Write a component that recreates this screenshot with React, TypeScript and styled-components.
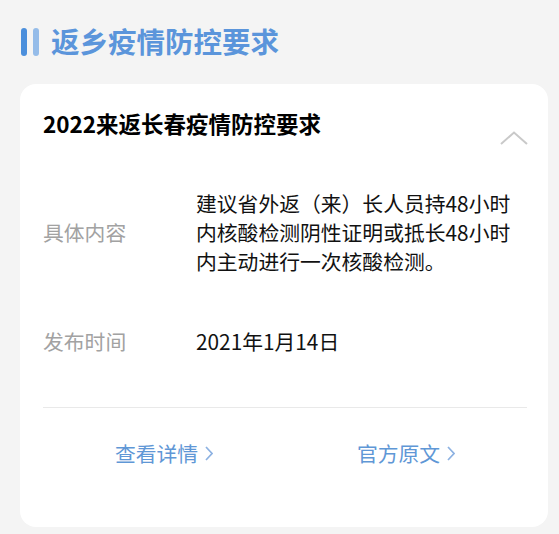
import * as React from 'react';
import styled, {createGlobalStyle} from 'styled-components';

const GlobalStyle = createGlobalStyle`
  html, body {
    margin: 0;
    padding: 0;
    background: #f4f4f4;
    font-family: "Noto Sans CJK SC", "Noto Sans", sans-serif;
  }
`;

type InfoItem = {
  label: string;
  value: string;
  height: number;
};

const items: InfoItem[] = [
  {
    label: '具体内容',
    value: '建议省外返（来）长人员持48小时内核酸检测阴性证明或抵长48小时内主动进行一次核酸检测。',
    height: 136,
  },
  {label: '发布时间', value: '2021年1月14日', height: 82},
];

const links = ['查看详情', '官方原文'];

const ChevronUp = () => (
  <svg width="28" height="14" viewBox="0 0 28 14" fill="none">
    <polyline points="1,13 14,1.5 27,13" stroke="#c9c9c9" strokeWidth="2" />
  </svg>
);

const ChevronRight = () => (
  <svg width="8" height="15" viewBox="0 0 8 15" fill="none">
    <polyline points="1,1 7,7.5 1,14" stroke="#8db2e2" strokeWidth="1.7" />
  </svg>
);

const App = () => {
  return (
    <Page>
      <GlobalStyle />
      <PageHeader>
        <Bars>
          <Bar />
          <Bar $light />
        </Bars>
        <PageTitle>返乡疫情防控要求</PageTitle>
      </PageHeader>

      <Card>
        <CardHeader>
          <CardTitle>2022来返长春疫情防控要求</CardTitle>
          <Toggle>
            <ChevronUp />
          </Toggle>
        </CardHeader>

        {items.map((item) => (
          <InfoRow key={item.label} $height={item.height}>
            <Label>{item.label}</Label>
            <Value>{item.value}</Value>
          </InfoRow>
        ))}

        <Divider />

        <Footer>
          {links.map((text) => (
            <LinkCell key={text}>
              <LinkText>
                {text}
                <ChevronRight />
              </LinkText>
            </LinkCell>
          ))}
        </Footer>
      </Card>
    </Page>
  );
};

export default App;

const Page = styled.div`
  width: 559px;
  min-height: 534px;
  box-sizing: border-box;
  padding: 0 11px 0 20px;
`;

const PageHeader = styled.header`
  height: 82px;
  margin-bottom: 2px;
  display: flex;
  align-items: center;
  gap: 12px;
`;

const Bars = styled.div`
  display: flex;
  gap: 6px;
  margin-left: 1px;
  margin-top: 2px;
`;

const Bar = styled.span<{$light?: boolean}>`
  display: block;
  width: 6px;
  height: 28px;
  border-radius: 3px;
  background: ${(p) => (p.$light ? '#95bce9' : '#4b8fdc')};
`;

const PageTitle = styled.h1`
  margin: 0;
  font-size: 28.5px;
  line-height: 36px;
  font-weight: 700;
  color: #5b95db;
`;

const Card = styled.section`
  background: #fff;
  border-radius: 16px;
  padding: 0 21px 29px 23px;
  display: flex;
  flex-direction: column;
`;

const CardHeader = styled.div`
  height: 80px;
  display: flex;
  justify-content: space-between;
  align-items: flex-start;
`;

const CardTitle = styled.h2`
  margin: 23px 0 0;
  font-size: 22.5px;
  line-height: 32px;
  font-weight: 700;
  color: #000;
`;

const Toggle = styled.div`
  margin-top: 47px;
  margin-right: -1px;
  display: flex;
`;

const InfoRow = styled.div<{$height: number}>`
  height: ${(p) => p.$height}px;
  display: grid;
  grid-template-columns: 153px 322px;
  align-items: center;
  font-size: 20.8px;
  line-height: 29px;
`;

const Label = styled.span`
  color: #a2a2a2;
`;

const Value = styled.span`
  color: #111;
`;

const Divider = styled.hr`
  margin: 25px 0 0;
  border: 0;
  height: 1px;
  background: #e9e9e9;
`;

const Footer = styled.div`
  height: 90px;
  display: flex;
`;

const LinkCell = styled.div`
  flex: 1;
  display: flex;
  align-items: center;
  justify-content: center;
`;

const LinkText = styled.a`
  display: flex;
  align-items: center;
  gap: 7px;
  font-size: 20.8px;
  line-height: 29px;
  color: #5f97d6;
  text-decoration: none;
  cursor: pointer;
`;
